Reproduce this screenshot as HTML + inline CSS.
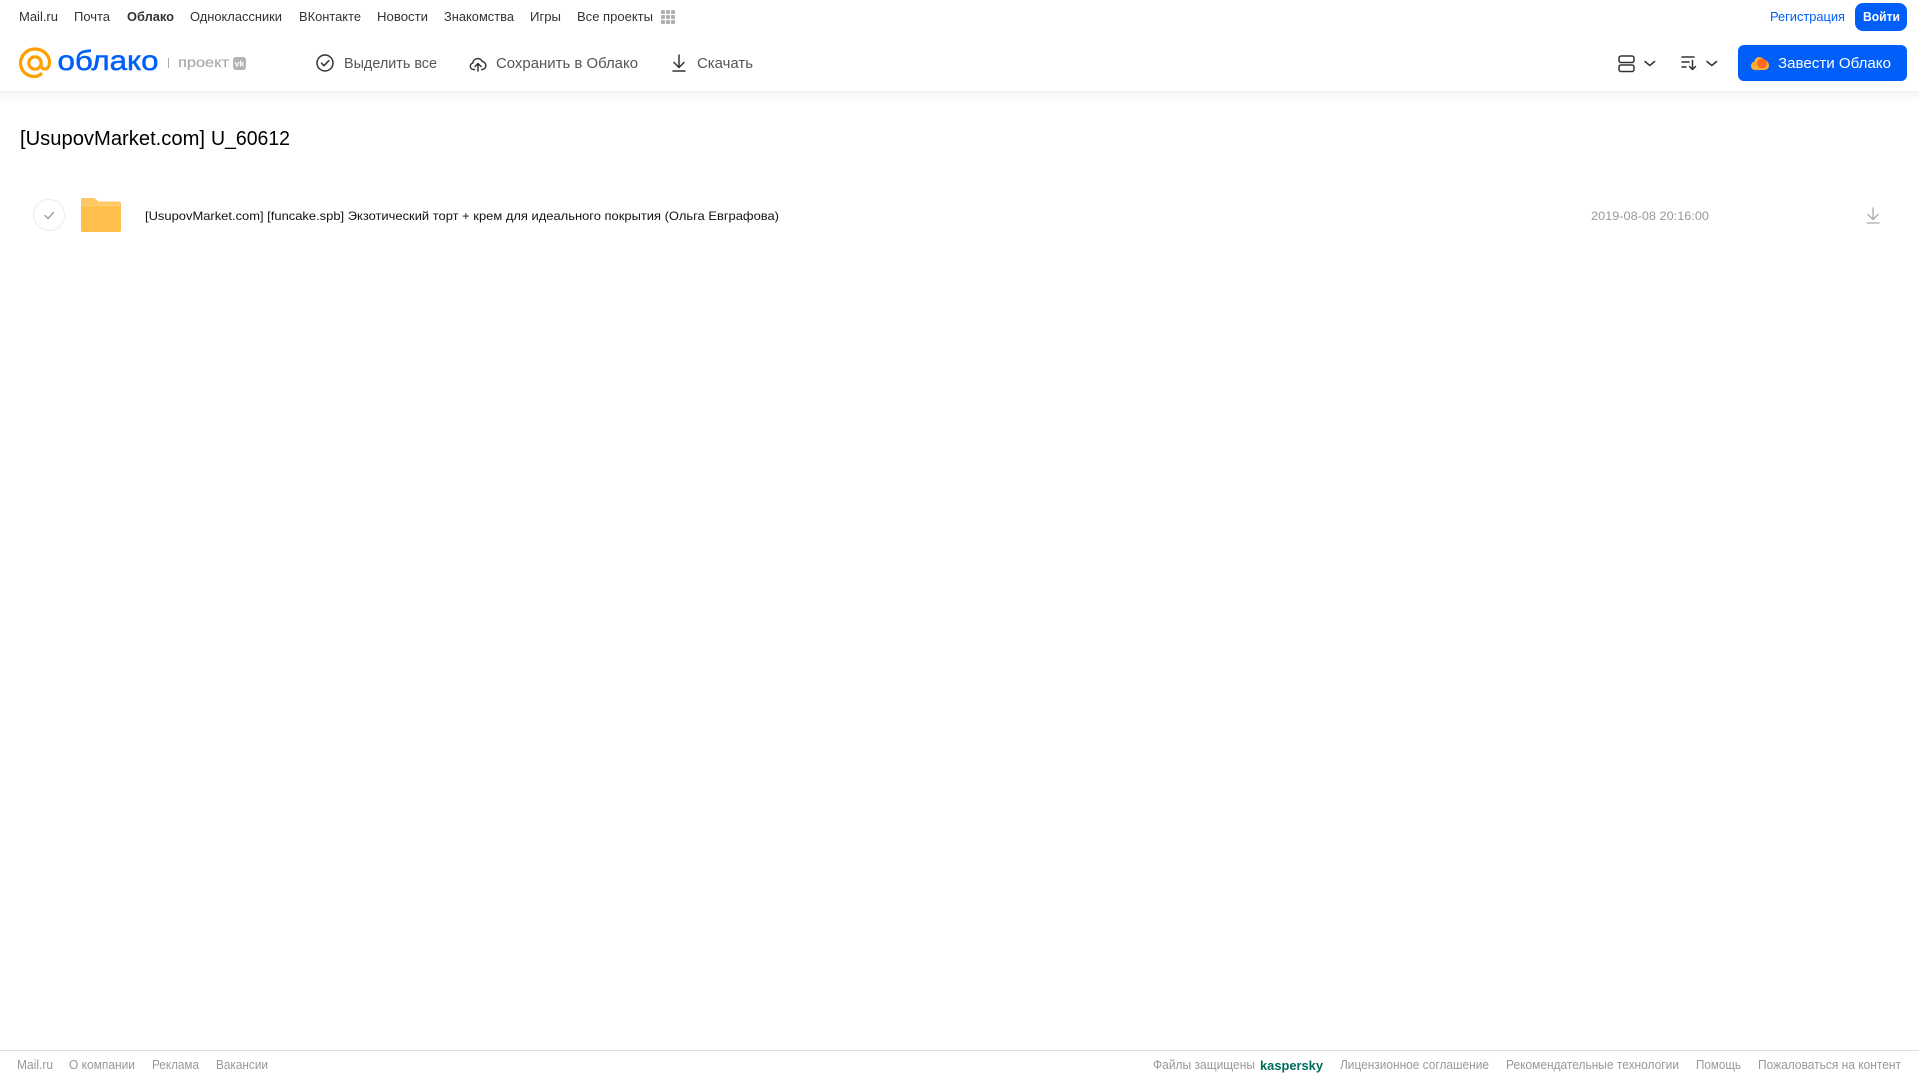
<!DOCTYPE html>
<html lang="ru"><head><meta charset="utf-8"><title>Облако</title>
<style>
html,body{margin:0;padding:0;background:#fff;width:1919px;height:1079px;overflow:hidden}
svg{display:block;position:absolute;left:0;top:0}
text{font-family:"Liberation Sans",Arial,sans-serif}
.n{font-size:12.500px;fill:#333}
.t{font-size:14.500px;fill:#555}
.f{font-size:12.500px;fill:#999}
.i{fill:none;stroke:#333;stroke-width:1.500;stroke-linecap:round;stroke-linejoin:round}
</style></head><body>
<svg width="1919" height="1079" viewBox="0 0 1919 1079" xmlns="http://www.w3.org/2000/svg">
<defs><linearGradient id="s" x1="0" y1="0" x2="0" y2="1"><stop offset="0" stop-color="#f2f2f2"/><stop offset="1" stop-color="#fff"/></linearGradient></defs>
<rect x="0" y="91" width="1919" height="10" fill="url(#s)"/>

<text class="n" x="19" y="21" textLength="39" lengthAdjust="spacingAndGlyphs">Mail.ru</text>
<text class="n" x="74" y="21" textLength="36" lengthAdjust="spacingAndGlyphs">Почта</text>
<text class="n" x="127" y="21" textLength="47" lengthAdjust="spacingAndGlyphs" font-weight="bold">Облако</text>
<text class="n" x="190" y="21" textLength="92" lengthAdjust="spacingAndGlyphs">Одноклассники</text>
<text class="n" x="299" y="21" textLength="62" lengthAdjust="spacingAndGlyphs">ВКонтакте</text>
<text class="n" x="377" y="21" textLength="51" lengthAdjust="spacingAndGlyphs">Новости</text>
<text class="n" x="444" y="21" textLength="70" lengthAdjust="spacingAndGlyphs">Знакомства</text>
<text class="n" x="530" y="21" textLength="31" lengthAdjust="spacingAndGlyphs">Игры</text>
<text class="n" x="577" y="21" textLength="76" lengthAdjust="spacingAndGlyphs">Все проекты</text>
<g fill="#b0b0b0"><rect x="661" y="10" width="4" height="4" rx="1"/><rect x="666" y="10" width="4" height="4" rx="1"/><rect x="671" y="10" width="4" height="4" rx="1"/><rect x="661" y="15" width="4" height="4" rx="1"/><rect x="666" y="15" width="4" height="4" rx="1"/><rect x="671" y="15" width="4" height="4" rx="1"/><rect x="661" y="20" width="4" height="4" rx="1"/><rect x="666" y="20" width="4" height="4" rx="1"/><rect x="671" y="20" width="4" height="4" rx="1"/></g>

<path d="M41 74C39 75.800 37 76.500 34.500 76.500 26.500 76.500 20.500 70.500 20.500 63 20.500 55.500 27 49 35 49 43 49 49.500 55 49.500 62.500 49.500 66.500 47.500 69 44.800 69 42.400 69 41 67.200 41 64.500V63" fill="none" stroke="#ffa000" stroke-width="3.200" stroke-linecap="round"/>
<circle cx="35" cy="63" r="6.200" fill="none" stroke="#ffa000" stroke-width="3.200"/>
<text x="57.500" y="70" font-size="28" fill="#005ff9" stroke="#005ff9" stroke-width=".5" textLength="101" lengthAdjust="spacingAndGlyphs">облако</text>
<rect x="168" y="58" width="1" height="10" fill="#aaa"/>
<text x="178" y="67" font-size="14" fill="#aaa" stroke="#aaa" stroke-width=".2" textLength="51" lengthAdjust="spacingAndGlyphs">проект</text>
<rect x="233" y="57" width="13" height="13" rx="3" fill="#b3b3b3"/>
<text x="234.800" y="66.500" font-size="8" font-weight="bold" fill="#fff" textLength="9.500" lengthAdjust="spacingAndGlyphs">vk</text>

<circle class="i" cx="325" cy="63" r="8"/><path class="i" d="M321.500 63.200l2.500 2.500 4.800-5"/>
<text class="t" x="344" y="68" textLength="93" lengthAdjust="spacingAndGlyphs">Выделить все</text>
<path class="i" d="M474.500 69.500h-1a3.300 3.300 0 0 1-.7-6.500 5 5 0 0 1 9.500-1.500 4.100 4.100 0 0 1 .5 8h-1"/><path class="i" d="M478 71V63.500M475 66.500l3-3 3 3"/>
<text class="t" x="496" y="68" textLength="142" lengthAdjust="spacingAndGlyphs">Сохранить в Облако</text>
<path class="i" d="M679 55v12M674 62.500l5 5 5-5M673 71h12"/>
<text class="t" x="697" y="68" textLength="56" lengthAdjust="spacingAndGlyphs">Скачать</text>

<text x="1770" y="21" font-size="12.500" fill="#005ff9" textLength="75" lengthAdjust="spacingAndGlyphs">Регистрация</text>
<rect x="1855" y="3" width="52" height="28" rx="8" fill="#005ff9"/>
<text x="1863" y="21" font-size="12.500" font-weight="bold" fill="#fff" textLength="37" lengthAdjust="spacingAndGlyphs">Войти</text>

<rect class="i" x="1619" y="56" width="15" height="6.500" rx="2"/><rect class="i" x="1619" y="65" width="15" height="6.500" rx="2"/>
<path class="i" d="M1645 61.500l4.800 4 4.800-4"/>
<path class="i" d="M1682 57h12M1682 62h7M1682 67h4M1692.500 60.500v8.500M1689.500 66.500l3 3 3-3"/>
<path class="i" d="M1707 61.500l4.800 4 4.800-4"/>
<rect x="1738" y="45" width="169" height="36" rx="6" fill="#005ff9"/>
<path d="M1755 70c-3 0-4-2.500-4-4 0-2.500 1.500-4 3.500-4.500 .5-3 2.500-4.500 4.500-4.500 2.500 0 4 1.500 5 3 3 .5 5 2.500 5 5.500 0 2.500-2 4.500-4.500 4.500z" fill="#ffae33"/>
<circle cx="1762" cy="63.500" r="5" fill="#ff6a1a"/>
<text x="1778" y="68" font-size="14.500" fill="#fff" textLength="113" lengthAdjust="spacingAndGlyphs">Завести Облако</text>

<text x="20" y="145" font-size="20" fill="#000" textLength="185" lengthAdjust="spacingAndGlyphs">[UsupovMarket.com]</text>
<text x="211" y="145" font-size="20" fill="#000" textLength="79" lengthAdjust="spacingAndGlyphs">U_60612</text>

<circle cx="49" cy="215" r="15.500" fill="#fff" stroke="#ececec"/>
<path d="M45 215.500l3 3 5.500-6" fill="none" stroke="#999" stroke-width="1.300" stroke-linecap="round" stroke-linejoin="round"/>
<path d="M81 200a2 2 0 0 1 2-2h10c2 0 3 1 4 2l1.500 1.500H119a2 2 0 0 1 2 2V230a2 2 0 0 1-2 2H83a2 2 0 0 1-2-2z" fill="#ffc864"/>
<path d="M81 206h40v24a2 2 0 0 1-2 2H83a2 2 0 0 1-2-2z" fill="#ffbf4a"/>
<rect x="81" y="205" width="40" height="1" fill="#ffd27f"/>
<text x="145" y="220" font-size="12" fill="#111" textLength="634" lengthAdjust="spacingAndGlyphs">[UsupovMarket.com] [funcake.spb] Экзотический торт + крем для идеального покрытия (Ольга Евграфова)</text>
<text x="1591" y="220" font-size="12" fill="#999" textLength="118" lengthAdjust="spacingAndGlyphs">2019-08-08 20:16:00</text>
<path d="M1873 208v11M1868 214.500l5 5 5-5M1867 223h12" fill="none" stroke="#aaa" stroke-width="1.300" stroke-linejoin="round" stroke-linecap="round"/>

<rect x="0" y="1050" width="1919" height="1" fill="#ddd"/>
<text class="f" x="17" y="1069" textLength="36" lengthAdjust="spacingAndGlyphs">Mail.ru</text>
<text class="f" x="69" y="1069" textLength="66" lengthAdjust="spacingAndGlyphs">О компании</text>
<text class="f" x="152" y="1069" textLength="47" lengthAdjust="spacingAndGlyphs">Реклама</text>
<text class="f" x="216" y="1069" textLength="52" lengthAdjust="spacingAndGlyphs">Вакансии</text>
<text class="f" x="1153" y="1069" textLength="102" lengthAdjust="spacingAndGlyphs">Файлы защищены</text>
<text x="1260" y="1070" font-size="13" font-weight="bold" fill="#006d5c" textLength="63" lengthAdjust="spacingAndGlyphs">kaspersky</text>
<text class="f" x="1340" y="1069" textLength="149" lengthAdjust="spacingAndGlyphs">Лицензионное соглашение</text>
<text class="f" x="1506" y="1069" textLength="173" lengthAdjust="spacingAndGlyphs">Рекомендательные технологии</text>
<text class="f" x="1696" y="1069" textLength="45" lengthAdjust="spacingAndGlyphs">Помощь</text>
<text class="f" x="1758" y="1069" textLength="143" lengthAdjust="spacingAndGlyphs">Пожаловаться на контент</text>
</svg>
</body></html>
